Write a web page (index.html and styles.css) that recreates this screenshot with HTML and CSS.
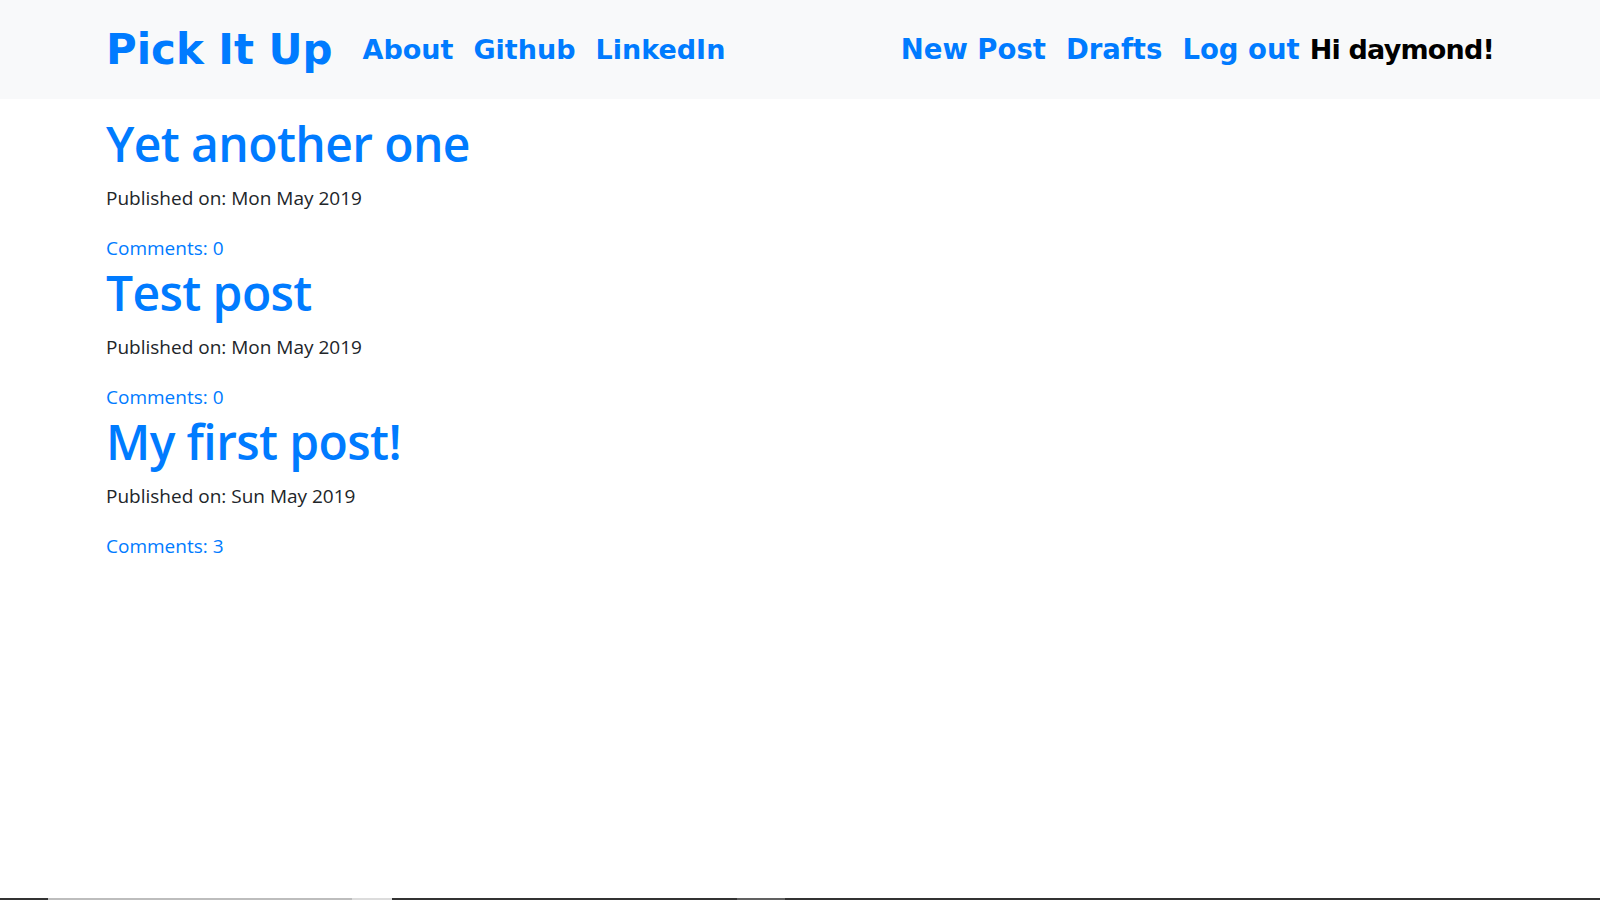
FILE: index.html
```html
<!DOCTYPE html>
<html lang="en">
<head>
<meta charset="utf-8">
<title>Pick It Up</title>
<link rel="stylesheet" href="styles.css">
</head>
<body>
<header class="navbar">
  <div class="container nav-inner">
    <a class="brand" href="#">Pick It Up</a>
    <nav class="nav-left">
      <a class="nav-link" href="#">About</a>
      <a class="nav-link" href="#">Github</a>
      <a class="nav-link" href="#">LinkedIn</a>
    </nav>
    <nav class="nav-right">
      <a class="nav-link" href="#">New Post</a>
      <a class="nav-link" href="#">Drafts</a>
      <a class="nav-link" href="#">Log out</a>
      <span class="greeting">Hi daymond!</span>
    </nav>
  </div>
</header>
<main class="container posts">
  <article class="post">
    <h1 class="post-title"><a href="#">Yet another one</a></h1>
    <p class="post-date">Published on: Mon May 2019</p>
    <a class="post-comments" href="#">Comments: 0</a>
  </article>
  <article class="post">
    <h1 class="post-title"><a href="#">Test post</a></h1>
    <p class="post-date">Published on: Mon May 2019</p>
    <a class="post-comments" href="#">Comments: 0</a>
  </article>
  <article class="post">
    <h1 class="post-title"><a href="#">My first post!</a></h1>
    <p class="post-date">Published on: Sun May 2019</p>
    <a class="post-comments" href="#">Comments: 3</a>
  </article>
</main>
<div class="taskbar">
  <span class="seg seg-dark seg-a"></span>
  <span class="seg seg-light seg-b"></span>
  <span class="seg seg-lighter seg-c"></span>
  <span class="seg seg-dark seg-d"></span>
  <span class="seg seg-mid seg-e"></span>
  <span class="seg seg-dark seg-f"></span>
</div>
</body>
</html>
```
FILE: styles.css
```css
* { box-sizing: border-box; }
html, body { margin: 0; padding: 0; }
body {
  font-family: "Open Sans", "Noto Sans", sans-serif;
  font-size: 19px;
  line-height: 30px;
  color: #212529;
  background: #fff;
}
a { color: #007bff; text-decoration: none; }

.container {
  padding: 0 106px;
}

.navbar {
  background: #f8f9fa;
  height: 99px;
}
.nav-inner {
  display: flex;
  align-items: center;
  height: 100%;
  font-family: "DejaVu Sans", sans-serif;
  font-weight: bold;
}
.brand {
  font-size: 41.9px;
  line-height: 1;
  margin-right: 20px;
}
.nav-left, .nav-right {
  display: flex;
  align-items: center;
}
.nav-right { margin-left: auto; }
.nav-link {
  font-size: 27.5px;
  line-height: 1;
  padding: 0 10px;
}
.nav-left .nav-link { font-size: 27px; }
.greeting {
  font-size: 27px;
  line-height: 1;
  color: #000;
  letter-spacing: -0.8px;
}

.posts { padding-top: 15px; }
.post-title {
  margin: 0 0 9px 0;
  font-size: 48px;
  line-height: 60px;
  font-weight: 600;
  letter-spacing: -0.6px;
}
.post-date { margin: 0 0 20px 0; }
.post-comments { display: block; }

.taskbar {
  position: fixed;
  left: 0;
  right: 0;
  bottom: 0;
  height: 2px;
  display: flex;
  background: #333;
}
.seg { display: block; height: 100%; }
.seg-dark { background: #333; }
.seg-light { background: #bdbdbd; }
.seg-lighter { background: #dcdcdc; }
.seg-mid { background: #616161; }
.seg-a { width: 48px; }
.seg-b { width: 304px; }
.seg-c { width: 40px; }
.seg-d { width: 345px; }
.seg-e { width: 48px; }
.seg-f { flex: 1; }
```
